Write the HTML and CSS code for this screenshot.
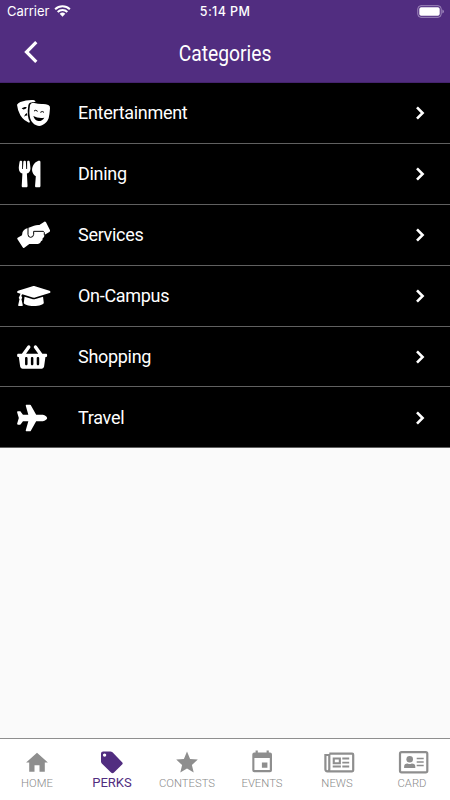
FILE: index.html
```html
<!DOCTYPE html>
<html lang="en">
<head>
<meta charset="utf-8">
<meta name="viewport" content="width=device-width">
<title>Categories</title>
<link rel="stylesheet" href="styles.css">
</head>
<body>
<div class="app">
  <header class="header">
    <div class="status">
      <div class="carrier"><span>Carrier</span>
        <svg class="wifi" viewBox="0 0 18 13"><path d="M1.2 5.1a11.4 11.4 0 0 1 15.6 0M3.9 8a7.4 7.4 0 0 1 10.2 0" fill="none" stroke="#fff" stroke-width="2.2"/><path d="M6 10a4.4 4.4 0 0 1 6 0l-3 3z" fill="#fff"/></svg>
      </div>
      <div class="time">5:14 PM</div>
      <svg class="battery" viewBox="0 0 28 13"><rect x=".8" y=".7" width="23.4" height="11.6" rx="3.2" fill="none" stroke="#a18bbd"/><rect x="2.3" y="2.2" width="20.4" height="8.6" rx="1.8" fill="#fff"/><path d="M25.4 4.5q1.5.6 1.5 2t-1.5 2z" fill="#a18bbd"/></svg>
    </div>
    <div class="titlebar">
      <svg class="back" viewBox="0 0 16 24"><path d="M13.3 2.2 3.5 12l9.8 9.8" fill="none" stroke="#fff" stroke-width="3.2"/></svg>
      <h1>Categories</h1>
    </div>
  </header>
  <main class="list">
    <a class="row"><svg class="icon" viewBox="48 48 108 90"><path d="M51 68q3-5 10-8 19-7 39-6 5 1 7 5l-17 3q-4 2-5 8-3 16-1 33 1 10 6 17l-3 2q-16-6-26-22-8-14-10-32z"/><path class="cut" d="m65 79 9-4 6 0q0 6-7 7-5 1-8-3zM72 104q3-9 9-11l1 8q-4-1-10 3z"/><path d="M92 66q5-5 11-3 11 3 22 3 11-1 20 3 6 3 5 10-1 17-4 30-6 15-20 21-8 4-17 0-14-7-18-20-5-16-1-40 0-2 2-4z"/><path class="face" d="M102 87q5-5 11 1M121 91q6-5 11 0"/><path class="cut" d="M100 102q15 8 33 5-7 11-18 10-11-2-15-15z"/></svg><span>Entertainment</span><svg class="chev" viewBox="0 0 10 16"><path d="m2 2.3 5.6 5.7L2 13.7"/></svg></a>
    <a class="row"><svg class="icon" viewBox="-54 -32 692 576"><path d="M207.9 15.2c.8 4.7 16.1 94.5 16.1 128.8 0 52.3-27.8 89.6-68.9 104.6L168 486.7c.7 13.7-10.2 25.3-24 25.3H80c-13.7 0-24.7-11.5-24-25.3l12.9-238.1C27.7 233.6 0 196.2 0 144 0 109.6 15.3 19.9 16.1 15.2 19.3-5.1 61.4-5.4 64 16.3v141.2c1.3 3.4 15.1 3.2 16 0 1.4-25.3 7.9-139.2 8-141.8 3.3-20.8 44.7-20.8 47.9 0 .2 2.7 6.6 116.5 8 141.8.9 3.2 14.8 3.4 16 0V16.3c2.6-21.6 44.8-21.4 48-1.1zm119.2 285.7l-15 185.1c-1.2 14 9.900 26 23.900 26h56c13.300 0 24-10.700 24-24V24c0-13.200-10.700-24-24-24-82.500 0-221.400 178.500-64.900 300.900z"/></svg><span>Dining</span><svg class="chev" viewBox="0 0 10 16"><path d="m2 2.3 5.6 5.7L2 13.7"/></svg></a>
    <a class="row"><svg class="icon" viewBox="48 48 108 90"><path d="m53 101 13-7q-1-10 6-16 5-5 12-6l18-7q8-3 16-2l15-10q3-1 5 2l12 24q1 3-2 5l-15 9q1 7-5 10 1 7-5 9-1 7-9 8H88l-15 11q-3 2-5-1l-16-25q-1-3 1-4z"/><path class="line" d="M84 72v19q0 9 8 9t9-9V82h29q4 1 3 11"/></svg><span>Services</span><svg class="chev" viewBox="0 0 10 16"><path d="m2 2.3 5.6 5.7L2 13.7"/></svg></a>
    <a class="row"><svg class="icon" viewBox="-22 -32 692 576"><path d="M622.34 153.2L343.4 67.5c-15.2-4.67-31.6-4.67-46.79 0L17.66 153.2c-23.54 7.23-23.54 38.36 0 45.59l48.63 14.94c-10.67 13.19-17.23 29.28-17.88 46.9C38.78 266.15 32 276.11 32 288c0 10.78 5.68 19.85 13.86 25.65L20.33 428.53C18.11 438.52 25.71 448 35.94 448h56.11c10.24 0 17.84-9.48 15.62-19.47L82.14 313.65C90.32 307.85 96 298.78 96 288c0-11.57-6.47-21.25-15.66-26.87.76-15.02 8.44-28.3 20.69-36.72L296.6 284.5c9.06 2.78 26.44 6.25 46.79 0l278.95-85.7c23.55-7.24 23.55-38.36 0-45.6zM352.79 315.09c-28.53 8.76-52.84 3.92-65.59 0l-145.02-44.55L128 384c0 35.35 85.96 64 192 64s192-28.65 192-64l-14.18-113.47-145.03 44.56z"/></svg><span>On-Campus</span><svg class="chev" viewBox="0 0 10 16"><path d="m2 2.3 5.6 5.7L2 13.7"/></svg></a>
    <a class="row"><svg class="icon" viewBox="-22 -32 692 576"><path d="M576 216v16c0 13.255-10.745 24-24 24h-8l-26.113 182.788C514.509 462.435 494.257 480 470.37 480H105.63c-23.887 0-44.139-17.565-47.518-41.212L32 256h-8c-13.255 0-24-10.745-24-24v-16c0-13.255 10.745-24 24-24h67.341l106.78-146.821c10.395-14.292 30.407-17.453 44.701-7.058 14.293 10.395 17.453 30.408 7.058 44.701L170.477 192h235.046L326.12 82.821c-10.395-14.292-7.234-34.306 7.059-44.701 14.291-10.395 34.306-7.235 44.701 7.058L484.659 192H552c13.255 0 24 10.745 24 24zM312 392V280c0-13.255-10.745-24-24-24s-24 10.745-24 24v112c0 13.255 10.745 24 24 24s24-10.745 24-24zm112 0V280c0-13.255-10.745-24-24-24s-24 10.745-24 24v112c0 13.255 10.745 24 24 24s24-10.745 24-24zm-224 0V280c0-13.255-10.745-24-24-24s-24 10.745-24 24v112c0 13.255 10.745 24 24 24s24-10.745 24-24z"/></svg><span>Shopping</span><svg class="chev" viewBox="0 0 10 16"><path d="m2 2.3 5.6 5.7L2 13.7"/></svg></a>
    <a class="row"><svg class="icon" viewBox="-22 -32 692 576"><path d="M480 192H365.71L260.61 8.06A16.014 16.014 0 0 0 246.71 0h-65.5c-10.63 0-18.3 10.17-15.38 20.39L214.86 192H112l-43.2-57.6c-3.02-4.03-7.77-6.4-12.8-6.4H16.01C5.6 128-2.04 137.78.49 147.88L32 256 .49 364.12C-2.04 374.22 5.6 384 16.01 384H56c5.04 0 9.78-2.37 12.8-6.4L112 320h102.86l-49.03 171.6c-2.92 10.22 4.75 20.4 15.38 20.4h65.5c5.74 0 11.04-3.08 13.89-8.06L365.71 320H480c35.35 0 96-28.65 96-64s-60.65-64-96-64z"/></svg><span>Travel</span><svg class="chev" viewBox="0 0 10 16"><path d="m2 2.3 5.6 5.7L2 13.7"/></svg></a>
  </main>
  <nav class="tabs">
    <a class="tab"><svg viewBox="0 0 32 26"><path d="M13.5 22.8v-6.6h5v6.6h5.3v-9.3h3.1L16 3.7 5.1 13.5h3.1v9.3z"/></svg><span>HOME</span></a>
    <a class="tab active"><svg viewBox="0 0 32 26"><path fill-rule="evenodd" d="m26.1 13.200-9.600-9.900Q15.500 2.500 14.400 2.500H7.100Q5 2.500 5 4.600v7.800q0 1.100.8 2l9.200 9.200q1.500 1.200 3 0l8.100-8q1.200-1.200 0-2.400zM8.600 7.800a1.700 1.700 0 1 1 0-3.400 1.700 1.700 0 0 1 0 3.400z"/></svg><span>PERKS</span></a>
    <a class="tab"><svg viewBox="0 0 32 26"><path d="m16 2.500 3.100 7.400 7.700.7-5.900 5.400 1.800 7.600-6.700-4.100-6.700 4.100 1.800-7.600-5.900-5.400 7.700-.7z"/></svg><span>CONTESTS</span></a>
    <a class="tab"><svg viewBox="0 0 32 26"><path fill-rule="evenodd" d="M9.600 1.500h2.200v2h8.800v-2h2.200v2h1.200q2 0 2 2v15.700q0 2-2 2H8.300q-2 0-2-2V5.500q0-2 2-2h1.300zM8.400 9v12.100h15.400V9zm7.500 4.500h5.500v5.300h-5.500z"/></svg><span>EVENTS</span></a>
    <a class="tab"><svg class="news" viewBox="0 0 32 26"><path class="outline" d="M6.300 4.700h22.900q1 0 1 1v15.600q0 1-1 1H4.400q-2 0-2-2V6h3.900v14.300q0 2-2 2"/><path fill-rule="evenodd" d="M9.700 8.500h8.200v6.700H9.700zm2.100 2v2.700h4v-2.700zM19.300 8.500h6.900v2h-6.900zm0 4.200h6.900v1.900h-6.900zM9.700 16.500h8.200v1.900H9.700zm9.600 0h6.900v1.900h-6.900z"/></svg><span>NEWS</span></a>
    <a class="tab"><svg class="card" viewBox="0 0 32 26"><rect class="outline" x="3" y="3.200" width="27.300" height="20.200" rx="1.600"/><circle cx="12.700" cy="10.300" r="3.300"/><path d="M7.100 18.900v-1.200q0-3.200 3.500-3.200 2.100 1 4.200 0 3.500 0 3.500 3.200v1.200zM19.700 8.700h7v1.500h-7zm0 3.600h7v1.500h-7zm0 3.500h7v1.500h-7z"/></svg><span>CARD</span></a>
  </nav>
</div>
</body>
</html>
```
FILE: styles.css
```css
* { box-sizing: border-box; }
body { margin: 0; background: #fafafa; font-family: Roboto, sans-serif; }
.app { width: 450px; height: 800px; display: flex; flex-direction: column; overflow: hidden; }
svg { display: block; flex: none; }
.header { height: 83px; background: #512d80; color: #fff; border-bottom: 1px solid #45236e; }
.status { height: 23px; display: grid; grid-template-columns: 1fr auto 1fr; align-items: center; padding: 0 6px 0 7px; font: 13px/23px Inter, sans-serif; }
.carrier { display: flex; align-items: center; gap: 5px; letter-spacing: -.05px; }
.wifi { width: 17px; height: 13px; margin-top: -2px; }
.time { font-weight: 500; font-size: 12.5px; letter-spacing: .4px; margin-left: -1px; }
.battery { width: 28px; height: 13px; justify-self: end; margin: -1px -1px 0 0; }
.titlebar { height: 60px; display: grid; grid-template-columns: 52px 1fr 52px; align-items: center; }
.back { width: 16px; height: 24px; margin: -2px 0 0 23px; }
h1 { margin: 1px 0 0; text-align: center; font-size: 22px; line-height: 30px; font-weight: 400; transform: scaleX(.875); }
.list { flex: 1; }
.row { height: 60.9px; display: flex; align-items: center; padding: .6px 25px 0 16px; background: #000; color: #fff; border-bottom: 1px solid #606060; font-size: 18px; line-height: 24px; letter-spacing: -.3px; }
.icon { width: 36px; height: 30px; margin-right: 26px; fill: #fff; }
.icon .cut { fill: #000; }
.icon .line { fill: none; stroke: #000; stroke-width: 3; }
.icon .face { fill: none; stroke: #000; stroke-width: 3; }
.icon .face ~ .cut { stroke: none; }
.row span { flex: 1; }
.chev { width: 10px; height: 16px; fill: none; stroke: #fff; stroke-width: 2.6; }
.icon path:nth-child(3):nth-last-child(3) { stroke: #000; stroke-width: 3; paint-order: stroke; }
.tabs { height: 62px; border-top: 1px solid #8e8e8e; background: #fff; display: grid; grid-template-columns: repeat(6, 75px); }
.tab { display: flex; flex-direction: column; align-items: center; padding: 10px 1px 0 0; color: #8a8a8a; font-size: 11.3px; line-height: 18px; font-weight: 300; }
.tab svg { width: 32px; height: 26px; fill: #8e8e8e; }
.tab .outline { fill: none; stroke: #8e8e8e; stroke-width: 2.2; }
.tab .news { margin-left: 3px; }
.tab .card { margin-left: 2px; }
.tab.active { color: #512d80; font-size: 13px; line-height: 16px; font-weight: 400; }
.tab.active svg { fill: #512d80; }
```
